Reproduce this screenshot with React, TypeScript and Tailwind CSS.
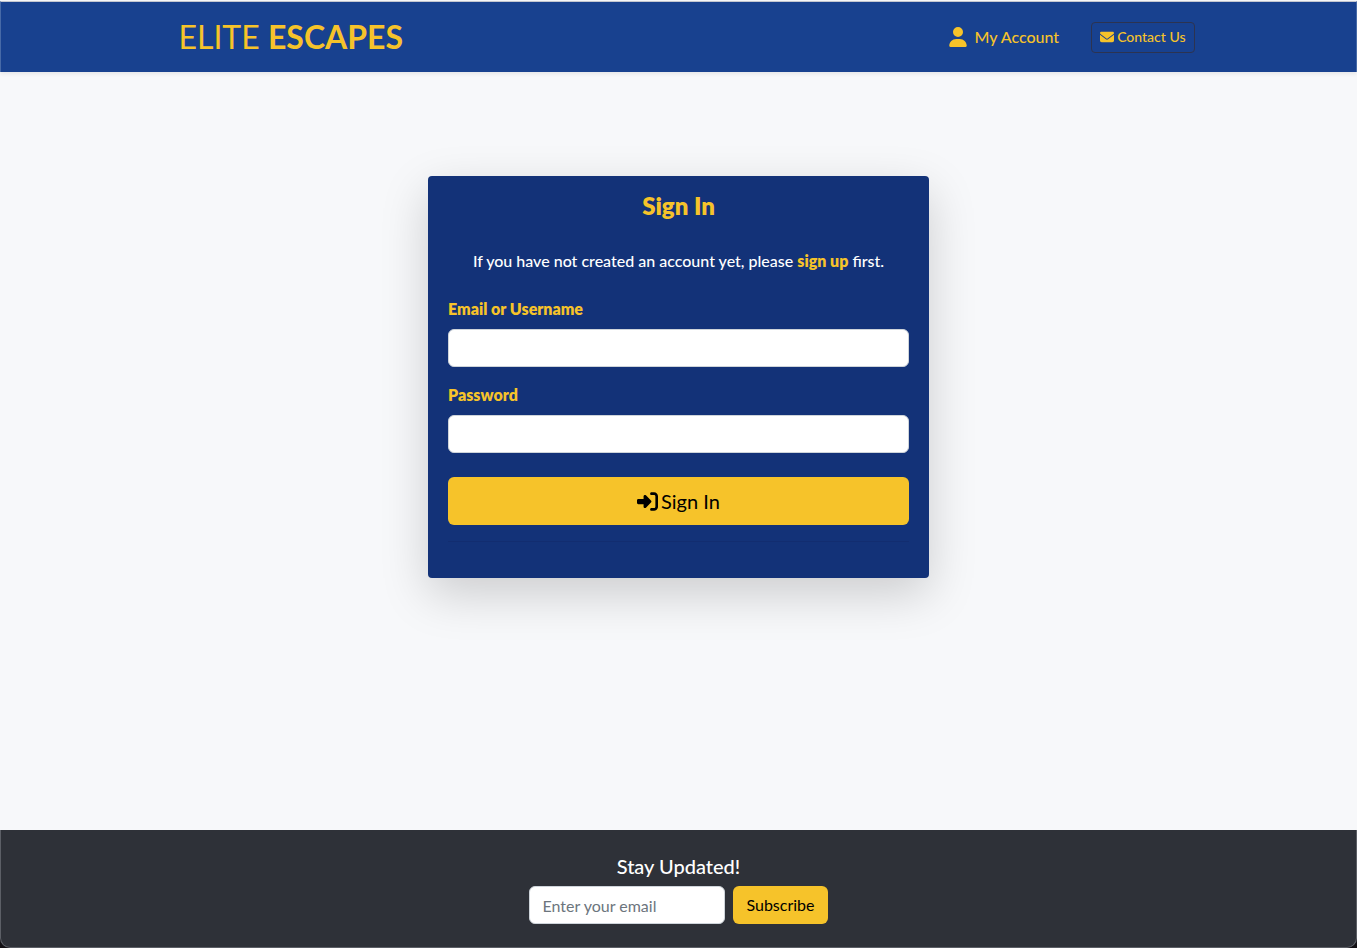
import { FaUser, FaEnvelope, FaRightToBracket } from "react-icons/fa6";

const inputStyle =
  "h-[38px] rounded-md border border-[#ced4da] bg-white px-3 text-base text-[#212529] placeholder:text-[#6c757d] placeholder:opacity-100";

function Header() {
  return (
    <header className="border-x border-t border-x-[#476aa7] border-t-[#c4c7cf] bg-[#18418f] shadow-[0_2px_4px_rgba(0,0,0,0.075)]">
      <div className="mx-auto flex h-[70px] max-w-[1140px] items-center justify-between pr-[54px] pl-[70px] text-[#f6c32a]">
        <a href="#" className="text-[32px] leading-[42px]">
          ELITE <strong className="font-bold">ESCAPES</strong>
        </a>
        <nav className="flex items-center gap-8">
          <a href="#account" className="flex items-center gap-2 text-base font-medium">
            <FaUser size={20} aria-hidden="true" className="w-[18px]" />
            My Account
          </a>
          <a
            href="#contact"
            className="flex h-[31px] items-center gap-[3px] rounded border border-[#2c3350] px-2 text-sm font-medium"
          >
            <FaEnvelope size={14} aria-hidden="true" />
            Contact Us
          </a>
        </nav>
      </div>
    </header>
  );
}

function SignInCard() {
  return (
    <section className="w-full max-w-[501px] rounded bg-[#133278] px-5 pt-3 pb-9 shadow-[0_16px_48px_rgba(0,0,0,0.175)]">
      <h1 className="text-center text-2xl leading-9 font-extrabold text-[#f6c32a]">Sign In</h1>
      <p className="mt-[25px] text-center text-base leading-6 font-medium text-white">
        If you have not created an account yet, please{" "}
        <a href="#signup" className="font-extrabold text-[#f6c32a]">
          sign up
        </a>{" "}
        first.
      </p>
      <form className="mt-6 flex flex-col">
        <label htmlFor="login" className="mb-2 text-base leading-6 font-extrabold text-[#f6c32a]">
          Email or Username
        </label>
        <input id="login" type="text" className={inputStyle} />
        <label htmlFor="password" className="mt-4 mb-2 text-base leading-6 font-extrabold text-[#f6c32a]">
          Password
        </label>
        <input id="password" type="password" className={inputStyle} />
        <button
          type="submit"
          className="mt-6 flex h-12 items-center justify-center gap-[3px] rounded-md bg-[#f6c32a] text-xl text-black"
        >
          <FaRightToBracket size={21} aria-hidden="true" />
          Sign In
        </button>
      </form>
      <hr className="mt-4 border-[#122d70]" />
    </section>
  );
}

function Footer() {
  return (
    <footer className="bg-[#121014]">
      <div className="rounded-b-[10px] border-x border-b border-[#5c5f66] bg-[#2e3138] px-4 pt-6 pb-[23px]">
        <h2 className="mb-2 text-center text-xl leading-6 font-medium text-white">Stay Updated!</h2>
        <form className="flex justify-center gap-2">
          <input
            type="email"
            aria-label="Email address"
            placeholder="Enter your email"
            className={`${inputStyle} w-[196px]`}
          />
          <button type="submit" className="h-[38px] rounded-md bg-[#f6c32a] px-[13px] text-base text-black">
            Subscribe
          </button>
        </form>
      </div>
    </footer>
  );
}

export default function App() {
  return (
    <div className="flex min-h-screen flex-col bg-[#f7f8fa] pt-px font-['Lato',sans-serif]">
      <Header />
      <main className="flex grow justify-center px-4 pt-[104px] pb-16">
        <div className="flex w-full items-start justify-center">
          <SignInCard />
        </div>
      </main>
      <Footer />
    </div>
  );
}
